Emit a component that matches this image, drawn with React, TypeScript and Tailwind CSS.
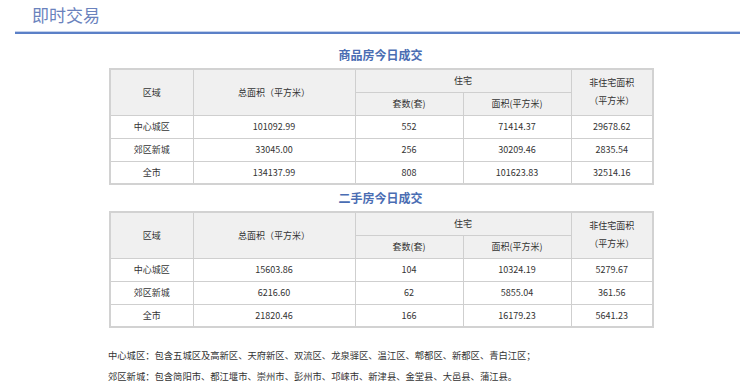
import React from 'react'

const font = { fontFamily: '"Noto Sans CJK SC", "Noto Sans", sans-serif' }

type Row = { area: string; total: string; sets: string; res: string; nonRes: string }

const newHouse: Row[] = [
  { area: '中心城区', total: '101092.99', sets: '552', res: '71414.37', nonRes: '29678.62' },
  { area: '郊区新城', total: '33045.00', sets: '256', res: '30209.46', nonRes: '2835.54' },
  { area: '全市', total: '134137.99', sets: '808', res: '101623.83', nonRes: '32514.16' },
]

const secondHand: Row[] = [
  { area: '中心城区', total: '15603.86', sets: '104', res: '10324.19', nonRes: '5279.67' },
  { area: '郊区新城', total: '6216.60', sets: '62', res: '5855.04', nonRes: '361.56' },
  { area: '全市', total: '21820.46', sets: '166', res: '16179.23', nonRes: '5641.23' },
]

const th = 'border border-[#cfcfcf] bg-[#f0f0f0] font-normal text-center align-middle p-0'
const td = 'border border-[#cfcfcf] text-center align-middle p-0'

const DealTable = ({ title, rows }: { title: string; rows: Row[] }) => (
  <div>
    <div className="h-[14px] leading-[14px] text-center text-[12px] font-bold text-[#4a6db3] ml-[109px] w-[543px]">
      {title}
    </div>
    <table className="mt-[6px] ml-[109px] w-[543px] table-fixed border-collapse border-2 border-[#d2d2d2] text-[9px] text-[#333]">
      <colgroup>
        <col className="w-[83px]" />
        <col className="w-[162px]" />
        <col className="w-[108px]" />
        <col className="w-[108px]" />
        <col className="w-[82px]" />
      </colgroup>
      <thead>
        <tr className="h-[23px]">
          <th rowSpan={2} className={th}>区域</th>
          <th rowSpan={2} className={th}>总面积（平方米）</th>
          <th colSpan={2} className={th}>住宅</th>
          <th rowSpan={2} className={th + ' leading-[18px]'}>
            非住宅面积
            <br />
            （平方米）
          </th>
        </tr>
        <tr className="h-[23px]">
          <th className={th}>套数(套)</th>
          <th className={th}>面积(平方米)</th>
        </tr>
      </thead>
      <tbody>
        {rows.map((r, i) => (
          <tr key={i} className="h-[23px]">
            <td className={td}>{r.area}</td>
            <td className={td}>{r.total}</td>
            <td className={td}>{r.sets}</td>
            <td className={td}>{r.res}</td>
            <td className={td}>{r.nonRes}</td>
          </tr>
        ))}
      </tbody>
    </table>
  </div>
)

export default function App() {
  return (
    <div className="w-[740px] h-[390px] overflow-hidden bg-white" style={font}>
      {/* Title */}
      <div className="pl-[32px] pt-[6px] h-[31px] text-[17px] leading-[18px] text-[#6a82bd]">即时交易</div>
      <div className="ml-[15px] h-[1px] bg-[#c3d1ec]" />
      <div className="ml-[15px] h-[2px] bg-[#5b80c7]" />

      <div className="mt-[14px]">
        <DealTable title="商品房今日成交" rows={newHouse} />
      </div>
      <div className="mt-[6px]">
        <DealTable title="二手房今日成交" rows={secondHand} />
      </div>

      {/* Notes */}
      <div className="mt-[17px] ml-[108px] text-[9.3px] leading-[21px] text-[#333]">
        <div>中心城区：包含五城区及高新区、天府新区、双流区、龙泉驿区、温江区、郫都区、新都区、青白江区；</div>
        <div>郊区新城：包含简阳市、都江堰市、崇州市、彭州市、邛崃市、新津县、金堂县、大邑县、蒲江县。</div>
      </div>
    </div>
  )
}
